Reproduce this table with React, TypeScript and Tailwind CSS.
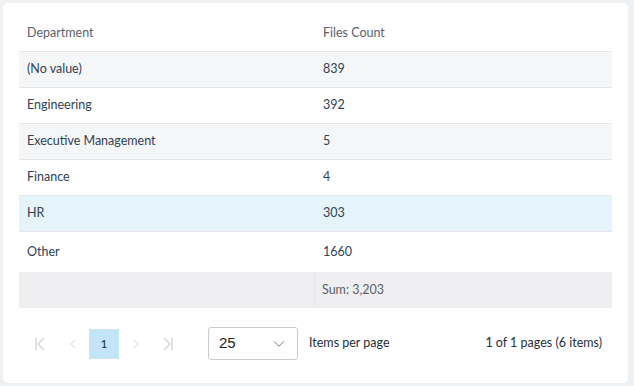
import { ChevronDown, ChevronLeft, ChevronRight } from "lucide-react";

type Row = { dept: string; count: string };

const rows: Row[] = [
  { dept: "(No value)", count: "839" },
  { dept: "Engineering", count: "392" },
  { dept: "Executive Management", count: "5" },
  { dept: "Finance", count: "4" },
  { dept: "HR", count: "303" },
  { dept: "Other", count: "1660" },
];

function rowBg(i: number) {
  if (i === 4) return "bg-[#e5f3fb]";
  return i % 2 === 0 ? "bg-[#f5f6f8]" : "bg-white";
}

function FirstIcon() {
  return (
    <svg width="12" height="16" viewBox="0 0 12 16" fill="none" stroke="#c9ced3" strokeWidth="1.2">
      <path d="M2 2v12M10 2L4 8l6 6" />
    </svg>
  );
}

function LastIcon() {
  return (
    <svg width="12" height="16" viewBox="0 0 12 16" fill="none" stroke="#c9ced3" strokeWidth="1.2">
      <path d="M10 2v12M2 2l6 6-6 6" />
    </svg>
  );
}

export default function App() {
  return (
    <div className="min-h-[386px] w-[634px] bg-[#eef0f2] p-[3px] pr-[6px] font-['Lato','Noto_Sans',sans-serif] text-[12.5px] text-[#2f4254]">
      <div className="h-[380px] rounded-[5px] bg-white px-[16px] pt-[13px]">
        <div className="w-[593px]">
          <div className="flex h-[36px] items-center border-b border-[#e4e6e8] text-[#5a6067]">
            <div className="w-[296px] pl-[8px]">Department</div>
            <div className="pl-[8px]">Files Count</div>
          </div>
          {rows.map((r, i) => (
            <div
              key={r.dept}
              className={`flex items-center border-b border-[#e4e6e8] ${rowBg(i)} ${i === 5 ? "h-[40px] border-b-0" : "h-[36px]"}`}
            >
              <div className="w-[296px] pl-[8px]">{r.dept}</div>
              <div className="pl-[8px]">{r.count}</div>
            </div>
          ))}
          <div className="flex h-[36px] items-center bg-[#efeff1] text-[#5a6067]">
            <div className="h-full w-[296px] border-r border-[#e6e7e9]" />
            <div className="pl-[7px]">Sum: 3,203</div>
          </div>
        </div>
        <div className="mt-[19px] flex items-center">
          <div className="flex items-center">
            <div className="flex w-[34px] justify-center pl-[8px]">
              <FirstIcon />
            </div>
            <div className="flex w-[36px] justify-center pl-[4px]">
              <ChevronLeft size={16} strokeWidth={1.2} color="#c9ced3" />
            </div>
            <div className="flex h-[30px] w-[30px] items-center justify-center bg-[#c4e4f7] text-[12px] text-[#1f2d3a]">1</div>
            <div className="flex w-[33px] justify-center">
              <ChevronRight size={16} strokeWidth={1.2} color="#c9ced3" />
            </div>
            <div className="flex w-[32px] justify-center">
              <LastIcon />
            </div>
          </div>
          <div className="ml-[24px] flex h-[33px] w-[90px] items-center justify-between rounded-[3px] border border-[#c9cdd1] pl-[10px] pr-[9px] font-['Liberation_Sans',Arial,sans-serif] text-[15px] text-[#222]">
            <span>25</span>
            <ChevronDown size={18} strokeWidth={1.2} color="#666" />
          </div>
          <span className="ml-[11px] text-[#1f2d3a]">Items per page</span>
          <span className="ml-auto mr-[10px] text-[#1f2d3a]">1 of 1 pages (6 items)</span>
        </div>
      </div>
    </div>
  );
}
